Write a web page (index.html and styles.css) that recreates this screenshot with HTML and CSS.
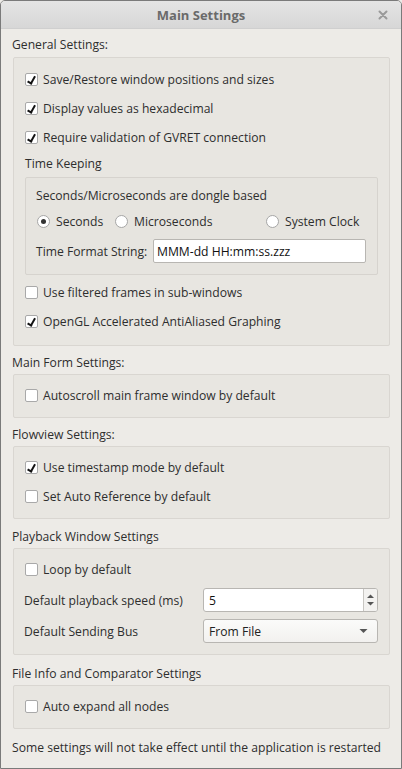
FILE: index.html
```html
<!DOCTYPE html>
<html>
<head>
<meta charset="utf-8">
<link rel="stylesheet" href="styles.css">
</head>
<body>
<div class="window">
  <div class="titlebar">
    <span class="title">Main Settings</span>
    <svg class="close" width="10" height="10" viewBox="0 0 10 10"><path d="M1.5 1.5 L8.5 8.5 M8.5 1.5 L1.5 8.5" stroke="#9a9a9a" stroke-width="2" stroke-linecap="round"/></svg>
  </div>
  <div class="content">
    <div class="section-label first">General Settings:</div>
    <div class="group g1">
      <div class="row"><span class="cb on"></span>Save/Restore window positions and sizes</div>
      <div class="row"><span class="cb on"></span>Display values as hexadecimal</div>
      <div class="row"><span class="cb on"></span>Require validation of GVRET connection</div>
      <div class="sub-label">Time Keeping</div>
      <div class="inner">
        <div class="inner-label">Seconds/Microseconds are dongle based</div>
        <div class="radios">
          <span class="radio-item r1"><span class="rb on"></span>Seconds</span>
          <span class="radio-item r2"><span class="rb"></span>Microseconds</span>
          <span class="radio-item r3"><span class="rb"></span>System Clock</span>
        </div>
        <div class="fmt-row">
          <span class="fmt-label">Time Format String:</span>
          <span class="input">MMM-dd HH:mm:ss.zzz</span>
        </div>
      </div>
      <div class="row after-inner"><span class="cb"></span>Use filtered frames in sub-windows</div>
      <div class="row"><span class="cb on"></span>OpenGL Accelerated AntiAliased Graphing</div>
    </div>

    <div class="section-label s2">Main Form Settings:</div>
    <div class="group">
      <div class="row"><span class="cb"></span>Autoscroll main frame window by default</div>
    </div>

    <div class="section-label s3">Flowview Settings:</div>
    <div class="group">
      <div class="row"><span class="cb on"></span>Use timestamp mode by default</div>
      <div class="row"><span class="cb"></span>Set Auto Reference by default</div>
    </div>

    <div class="section-label s4">Playback Window Settings</div>
    <div class="group g4">
      <div class="row"><span class="cb"></span>Loop by default</div>
      <div class="field-row fr1">
        <span class="field-label">Default playback speed (ms)</span>
        <span class="spin"><span class="spin-val">5</span><span class="spin-btns">
          <svg width="9" height="16" viewBox="0 0 9 16"><path d="M1 6 L4.5 2.5 L8 6 Z" fill="#555"/><path d="M1 10 L4.5 13.5 L8 10 Z" fill="#555"/></svg>
        </span></span>
      </div>
      <div class="field-row fr2">
        <span class="field-label">Default Sending Bus</span>
        <span class="combo"><span>From File</span>
          <svg width="9" height="6" viewBox="0 0 9 6"><path d="M0.5 1 L8.5 1 L4.5 5 Z" fill="#555"/></svg>
        </span>
      </div>
    </div>

    <div class="section-label s5">File Info and Comparator Settings</div>
    <div class="group">
      <div class="row"><span class="cb"></span>Auto expand all nodes</div>
    </div>

    <div class="footer-note">Some settings will not take effect until the application is restarted</div>
  </div>
</div>
</body>
</html>
```
FILE: styles.css
```css
html, body {
  margin: 0;
  padding: 0;
  background: #edebe7;
}
body {
  font-family: "Open Sans", "Noto Sans", sans-serif;
  font-size: 12.15px;
  color: #2e2e2e;
}
.window {
  width: 402px;
  height: 769px;
  box-sizing: border-box;
  border: 1px solid #7a7a7a;
  border-radius: 5px 5px 0 0;
  background: #edebe7;
  overflow: hidden;
}
.titlebar {
  height: 28px;
  box-sizing: border-box;
  background: linear-gradient(#e4e4e4, #d7d7d7);
  border-bottom: 1px solid #cfcfcf;
  display: flex;
  align-items: center;
  justify-content: center;
  position: relative;
}
.title {
  font-weight: bold;
  font-size: 13px;
  color: #6a6a6a;
}
.close {
  position: absolute;
  right: 13px;
  top: 9px;
}
.content {
  padding: 0 11px 0 11px;
}
.section-label {
  height: 18px;
  line-height: 18px;
  margin-top: 6px;
  margin-bottom: 2px;
}
.section-label.first {
  margin-top: 7px;
  margin-bottom: 3px;
}
.section-label.s2 { margin-top: 8px; }
.section-label.s3 { margin-top: 8px; }
.section-label.s4 { margin-top: 9px; }
.section-label.s5 { margin-top: 10px; }
.group {
  border: 1px solid #d9d6d1;
  border-radius: 2px;
  background: #e8e6e1;
  padding: 6px 11px 7px 11px;
  margin-left: 1px;
}
.g1 { padding-top: 7px; padding-bottom: 9px; }
.row {
  height: 29px;
  display: flex;
  align-items: center;
}
.cb {
  width: 13px;
  height: 13px;
  box-sizing: border-box;
  border: 1px solid #a9a9a9;
  border-radius: 2px;
  background: #fff;
  margin-right: 5px;
  display: inline-block;
  position: relative;
  flex: none;
}
.cb.on::after {
  content: "";
  position: absolute;
  left: 3px;
  top: 1px;
  width: 3px;
  height: 7px;
  border: solid #111;
  border-width: 0 2px 2px 0;
  transform: rotate(30deg);
}
.sub-label {
  height: 18px;
  line-height: 18px;
  margin-top: 3px;
  margin-bottom: 4px;
}
.inner {
  border: 1px solid #d6d3ce;
  border-radius: 2px;
  background: #e6e4df;
  padding: 9px 11px 11px 10px;
}
.inner-label {
  height: 18px;
  line-height: 18px;
}
.radios {
  height: 24px;
  margin-top: 4px;
  display: flex;
  align-items: center;
}
.radio-item {
  display: inline-flex;
  align-items: center;
  flex: none;
}
.r1 { width: 78px; margin-left: 1px; }
.r2 { width: 151px; }
.rb {
  width: 13px;
  height: 13px;
  box-sizing: border-box;
  border: 1px solid #a6a6a6;
  border-radius: 50%;
  background: #fff;
  margin-right: 6px;
  display: inline-block;
  position: relative;
  flex: none;
}
.rb.on::after {
  content: "";
  position: absolute;
  left: 3px;
  top: 3px;
  width: 5px;
  height: 5px;
  border-radius: 50%;
  background: #333;
}
.fmt-row {
  height: 24px;
  margin-top: 6px;
  display: flex;
  align-items: center;
}
.fmt-label {
  width: 117px;
  flex: none;
}
.input {
  flex: 1;
  height: 24px;
  box-sizing: border-box;
  border: 1px solid #b8b6b2;
  border-radius: 2px;
  background: #fff;
  display: flex;
  align-items: center;
  padding-left: 3px;
  color: #111;
}
.after-inner { margin-top: 3px; }
.field-row {
  height: 24px;
  display: flex;
  align-items: center;
}
.fr1 { margin-top: 4px; }
.fr2 { margin-top: 7px; }
.g4 { padding-bottom: 11px; }
.field-label {
  width: 179px;
  flex: none;
  margin-left: -1px;
}
.spin, .combo {
  flex: 1;
  height: 24px;
  box-sizing: border-box;
  border: 1px solid #b8b6b2;
  border-radius: 3px;
  display: flex;
  align-items: center;
}
.spin {
  background: #fff;
}
.spin-val {
  flex: 1;
  padding-left: 5px;
  color: #111;
}
.spin-btns {
  width: 13px;
  height: 22px;
  border-left: 1px solid #c8c6c2;
  background: #f3f2f0;
  display: flex;
  align-items: center;
  justify-content: center;
  border-radius: 0 2px 2px 0;
}
.combo {
  background: linear-gradient(#fbfbfa, #f2f1ef);
  padding: 0 9px 0 5px;
  justify-content: space-between;
  color: #222;
}
.footer-note {
  height: 18px;
  line-height: 18px;
  margin-top: 10px;
  white-space: nowrap;
}
```
